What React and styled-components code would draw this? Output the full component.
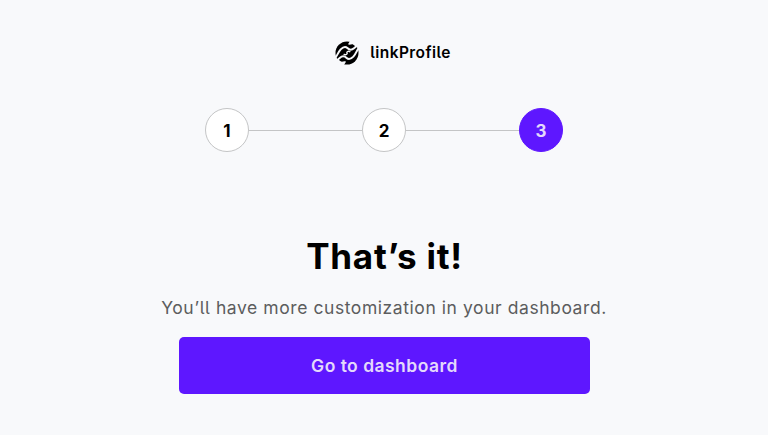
import React from "react";
import styled, { createGlobalStyle } from "styled-components";

const GlobalStyle = createGlobalStyle`
  * { box-sizing: border-box; }
  body {
    margin: 0;
    background: #f8f9fb;
    color: #000;
    font-family: Inter, "Open Sans", sans-serif;
    font-feature-settings: "cv05" 1;
  }
`;

const Page = styled.main`
  display: flex;
  flex-direction: column;
  align-items: center;
  height: 435px;
  padding-top: 40px;
  overflow: hidden;
`;

const Brand = styled.header`
  display: flex;
  align-items: center;
  gap: 11px;
  height: 26px;
  margin-left: 18px;
`;

const LogoMark = styled.svg`
  display: block;
  width: 24px;
  height: 24px;
`;

const BrandName = styled.span`
  font-size: 15.5px;
  font-weight: 600;
  line-height: 24px;
  letter-spacing: 0.42px;
  white-space: nowrap;
`;

const Steps = styled.ol`
  display: flex;
  align-items: center;
  width: 358px;
  margin: 42px 0 0;
  padding: 0;
  list-style: none;
`;

const Step = styled.li`
  display: flex;
  align-items: center;
  justify-content: center;
  flex: none;
  width: 44px;
  height: 44px;
  padding-top: 2px;
  border: 1px solid ${(p) => (p.$active ? "#5e17ff" : "#c4c5c6")};
  border-radius: 50%;
  background: ${(p) => (p.$active ? "#5e17ff" : "#fff")};
  color: ${(p) => (p.$active ? "#e4d9fb" : "#000")};
  font-size: 17px;
  font-weight: 650;
`;

const Connector = styled.li`
  flex: 1;
  height: 1px;
  background: #c4c5c6;
`;

const Title = styled.h1`
  margin: 82px 0 0;
  font-size: 35px;
  font-weight: 650;
  line-height: 44px;
  letter-spacing: 0.75px;
  text-indent: 1px;
  white-space: nowrap;
`;

const Subtitle = styled.p`
  margin: 18px 0 0;
  color: #5c5d5e;
  font-size: 17.5px;
  line-height: 24px;
  letter-spacing: 0.57px;
  white-space: nowrap;
`;

const Button = styled.button`
  width: 411px;
  height: 57px;
  margin: 17px 0 0 1px;
  padding: 0 0 1px;
  border: 0;
  border-radius: 5px;
  background: #5e17ff;
  color: #e4d9fb;
  font: 600 17.5px Inter, "Open Sans", sans-serif;
  font-feature-settings: inherit;
  letter-spacing: 0.47px;
`;

const LogoHalf = () => (
  <>
    <path
      d="M15 66C22 60 23 50 32 40C39 33 47 31 52 36C58 42 65 43 72 37L80 30L88 31"
      fill="none"
      stroke="#f8f9fb"
      strokeWidth="6"
    />
    <path d="M62 12L54 25C60 29 64 23 70 26L76 31L88 28L78 12Z" fill="#f8f9fb" />
    <path
      d="M50 51C51 46 56 44 61 48"
      fill="none"
      stroke="#f8f9fb"
      strokeWidth="4"
    />
  </>
);

export default function App() {
  return (
    <>
      <GlobalStyle />
      <Page>
        <Brand>
          <LogoMark viewBox="15 15 72 72" aria-hidden="true">
            <circle cx="51" cy="51" r="34.5" />
            <LogoHalf />
            <g transform="rotate(180 51 51)">
              <LogoHalf />
            </g>
          </LogoMark>
          <BrandName>linkProfile</BrandName>
        </Brand>
        <Steps>
          <Step>1</Step>
          <Connector />
          <Step>2</Step>
          <Connector />
          <Step $active>3</Step>
        </Steps>
        <Title>That’s it!</Title>
        <Subtitle>You’ll have more customization in your dashboard.</Subtitle>
        <Button>Go to dashboard</Button>
      </Page>
    </>
  );
}
